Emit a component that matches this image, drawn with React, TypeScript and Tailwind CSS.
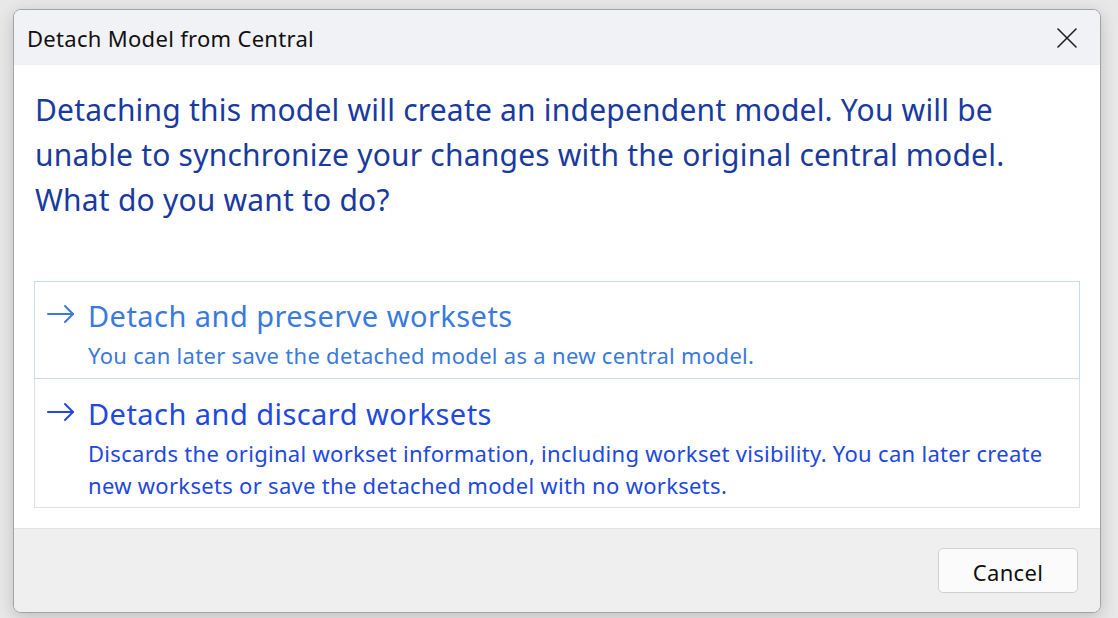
const Arrow = () => (
  <svg width="28" height="20" viewBox="0 0 28 20" fill="none" stroke="currentColor" strokeWidth="2" strokeLinecap="round" strokeLinejoin="round">
    <path d="M1 10h25" />
    <path d="M18 2l8 8-8 8" />
  </svg>
);

const CloseIcon = () => (
  <svg width="20" height="20" viewBox="0 0 20 20" fill="none" stroke="#1f1f1f" strokeWidth="1.6" strokeLinecap="round">
    <path d="M1 1l18 18" />
    <path d="M19 1L1 19" />
  </svg>
);

const options = [
  {
    title: "Detach and preserve worksets",
    lines: ["You can later save the detached model as a new central model."],
    active: true,
  },
  {
    title: "Detach and discard worksets",
    lines: [
      "Discards the original workset information, including workset visibility. You can later create",
      "new worksets or save the detached model with no worksets.",
    ],
    active: false,
  },
];

const App = () => {
  return (
    <div className="h-[618px] w-[1118px] overflow-hidden bg-[#e8e8e8] pl-[13px] pt-[9px] font-['Noto_Sans',sans-serif]">
      <div className="flex h-[604px] w-[1088px] flex-col overflow-hidden rounded-[8px] border border-[#a3a3a3] bg-white shadow-[0_4px_16px_rgba(0,0,0,0.18)]">
        <div className="flex h-[55px] shrink-0 items-center justify-between bg-[#f1f2f6] pl-[13px] pr-[23px]">
          <span className="pt-[2px] text-[22px] tracking-[0.3px] text-[#111]">Detach Model from Central</span>
          <CloseIcon />
        </div>

        <div className="flex flex-1 flex-col px-[20px] pt-[22px]">
          <p className="pl-px text-[30px] leading-[45px] tracking-[0.2px] text-[#1a3a9e]">
            Detaching this model will create an independent model. You will be
            <br />
            unable to synchronize your changes with the original central model.
            <br />
            What do you want to do?
          </p>

          <div className="mt-[59px] flex flex-col">
            {options.map((opt) => (
              <div
                key={opt.title}
                className={
                  opt.active
                    ? "flex border border-[#c7dcf1] pb-[7px] pl-[12px] pt-[15px] text-[#3a7ade]"
                    : "flex border border-t-0 border-[#e0e0e0] pb-[6px] pl-[12px] pt-[16px] text-[#2148e0]"
                }
              >
                <div className="flex h-[38px] w-[41px] shrink-0 items-center pb-[5px]">
                  <Arrow />
                </div>
                <div className="flex flex-col">
                  <span className="text-[29px] leading-[38px] tracking-[0.45px]">{opt.title}</span>
                  <span className="mt-[4px] text-[22px] leading-[32px] tracking-[0.3px]">
                    {opt.lines.map((l, i) => (
                      <span key={i} className="block">
                        {l}
                      </span>
                    ))}
                  </span>
                </div>
              </div>
            ))}
          </div>
        </div>

        <div className="flex h-[84px] shrink-0 justify-end border-t border-[#e3e3e3] bg-[#efefef] pr-[22px] pt-[19px]">
          <button className="h-[45px] w-[140px] rounded-[5px] border border-[#d0d0d0] bg-[#fbfbfb] pt-[3px] text-[22px] tracking-[0.3px] text-[#111]">
            Cancel
          </button>
        </div>
      </div>
    </div>
  );
};

export default App;
